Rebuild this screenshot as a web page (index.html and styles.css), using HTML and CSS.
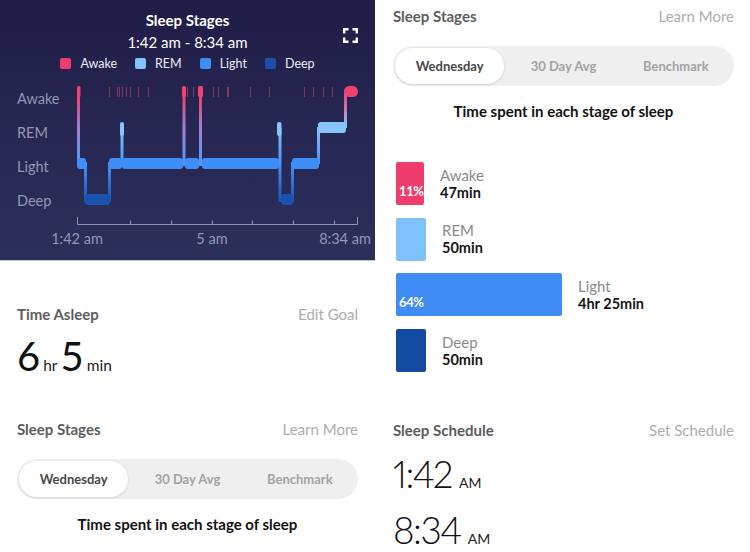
FILE: index.html
```
<!DOCTYPE html>
<html>
<head>
<meta charset="utf-8">
<link rel="stylesheet" href="styles.css">
</head>
<body>
<div class="page">
  <div class="col col-left">
    <section class="chart-panel">
      <div class="chart-title">Sleep Stages</div>
      <div class="chart-range">1:42 am - 8:34 am</div>
      <svg class="expand" width="15" height="15" viewBox="0 0 15 15"><path d="M1.2 5.5V1.2h4.3M9.5 1.2h4.3v4.3M13.8 9.5v4.3H9.5M5.5 13.8H1.2V9.5" fill="none" stroke="#fff" stroke-width="2.4"/></svg>
      <div class="legend">
        <span class="lg"><i class="sw awake"></i>Awake</span>
        <span class="lg"><i class="sw rem"></i>REM</span>
        <span class="lg"><i class="sw light"></i>Light</span>
        <span class="lg"><i class="sw deep"></i>Deep</span>
      </div>
      <svg class="hypno" width="375" height="188" viewBox="0 72 375 188">
        <defs>
          <linearGradient id="gAL" gradientUnits="userSpaceOnUse" x1="0" y1="88" x2="0" y2="166">
            <stop offset="0" stop-color="#f0426f"/><stop offset="0.15" stop-color="#e4467a"/><stop offset="0.55" stop-color="#9a84d6"/><stop offset="1" stop-color="#4f97f8"/>
          </linearGradient>
          <linearGradient id="gLD" gradientUnits="userSpaceOnUse" x1="0" y1="162" x2="0" y2="202">
            <stop offset="0" stop-color="#4a95f8"/><stop offset="1" stop-color="#1a54b2"/>
          </linearGradient>
          <linearGradient id="gRL" gradientUnits="userSpaceOnUse" x1="0" y1="126" x2="0" y2="164">
            <stop offset="0" stop-color="#8ac6fc"/><stop offset="1" stop-color="#4592f8"/>
          </linearGradient>
          <linearGradient id="gRD" gradientUnits="userSpaceOnUse" x1="0" y1="126" x2="0" y2="202">
            <stop offset="0" stop-color="#8ac6fc"/><stop offset="0.5" stop-color="#4592f8"/><stop offset="1" stop-color="#1a54b2"/>
          </linearGradient>
          <linearGradient id="gAR" gradientUnits="userSpaceOnUse" x1="0" y1="90" x2="0" y2="128">
            <stop offset="0" stop-color="#f0426f"/><stop offset="0.3" stop-color="#d9609a"/><stop offset="1" stop-color="#8ac6fc"/>
          </linearGradient>
        </defs>
        <text class="ylab" x="17" y="104">Awake</text>
        <text class="ylab" x="17" y="138">REM</text>
        <text class="ylab" x="17" y="172">Light</text>
        <text class="ylab" x="17" y="206">Deep</text>

        <g class="ticks" stroke="#e8456f" stroke-opacity="0.5" stroke-width="1">
          <line x1="109.5" y1="87" x2="109.5" y2="97"/>
          <line x1="117.5" y1="87" x2="117.5" y2="97"/>
          <line x1="119.5" y1="87" x2="119.5" y2="97"/>
          <line x1="122.5" y1="87" x2="122.5" y2="97"/>
          <line x1="126.5" y1="87" x2="126.5" y2="97"/>
          <line x1="130.5" y1="87" x2="130.5" y2="97"/>
          <line x1="138.5" y1="87" x2="138.5" y2="97"/>
          <line x1="148.5" y1="87" x2="148.5" y2="97"/>
          <line x1="187.5" y1="87" x2="187.5" y2="97"/>
          <line x1="193.5" y1="87" x2="193.5" y2="97"/>
          <line x1="213.5" y1="87" x2="213.5" y2="97"/>
          <line x1="218.5" y1="87" x2="218.5" y2="97"/>
          <line x1="227.5" y1="87" x2="227.5" y2="97"/>
          <line x1="228.5" y1="87" x2="228.5" y2="97"/>
          <line x1="250.5" y1="87" x2="250.5" y2="97"/>
          <line x1="269.5" y1="87" x2="269.5" y2="97"/>
          <line x1="304.5" y1="87" x2="304.5" y2="97"/>
          <line x1="313.5" y1="87" x2="313.5" y2="97"/>
          <line x1="323.5" y1="87" x2="323.5" y2="97"/>
          <line x1="332.5" y1="87" x2="332.5" y2="97"/>
        </g>

        <!-- connectors -->
        <rect x="77" y="90" width="3" height="76" fill="url(#gAL)"/>
        <rect x="84" y="162" width="3" height="40" fill="url(#gLD)"/>
        <rect x="108" y="162" width="3" height="40" fill="url(#gLD)"/>
        <rect x="120.5" y="128" width="3" height="34" fill="url(#gRL)"/>
        <rect x="182.5" y="90" width="3" height="76" fill="url(#gAL)"/>
        <rect x="199" y="90" width="3" height="76" fill="url(#gAL)"/>
        <rect x="278.5" y="128" width="3" height="74" fill="url(#gRD)"/>
        <rect x="291" y="162" width="3" height="40" fill="url(#gLD)"/>
        <rect x="317" y="127" width="3" height="37" fill="url(#gRL)"/>
        <rect x="344" y="90" width="3" height="38" fill="url(#gAR)"/>

        <!-- bands -->
        <g fill="#3f8ef7">
          <rect x="77" y="158" width="9" height="11" rx="3"/>
          <rect x="109" y="158" width="13" height="11" rx="3"/>
          <rect x="122" y="158" width="61" height="11" rx="3"/>
          <rect x="185" y="158" width="14" height="11" rx="3"/>
          <rect x="202" y="158" width="77" height="11" rx="3"/>
          <rect x="292" y="158" width="27" height="11" rx="3"/>
        </g>
        <g fill="#1a52b0">
          <rect x="85" y="194" width="25" height="11" rx="3"/>
          <rect x="281" y="194" width="12" height="11" rx="3"/>
        </g>
        <g fill="#86c3fb">
          <rect x="120" y="122" width="4" height="14" rx="2"/>
          <rect x="277" y="122" width="4.5" height="14" rx="2"/>
          <rect x="318" y="122" width="28" height="11" rx="3"/>
        </g>
        <g fill="#f0426f">
          <rect x="77" y="86" width="3.5" height="11" rx="1.5"/>
          <rect x="182" y="86" width="4" height="11" rx="1.5"/>
          <rect x="198" y="86" width="5" height="11" rx="1.5"/>
          <rect x="344" y="86" width="14" height="11" rx="5.5"/>
        </g>

        <!-- axis -->
        <g stroke="#8f94b6" stroke-width="1" fill="none">
          <path d="M77.5 217V224.5H357.5V217"/>
          <path d="M130.5 220.5V224M171.5 220.5V224M212.5 220.5V224M252.5 220.5V224M293.5 220.5V224M334.5 220.5V224"/>
        </g>
        <text class="xlab" x="77" y="244" text-anchor="middle">1:42 am</text>
        <text class="xlab" x="212" y="244" text-anchor="middle">5 am</text>
        <text class="xlab" x="345" y="244" text-anchor="middle">8:34 am</text>
      </svg>
    </section>

    <section class="block asleep">
      <div class="head"><span class="head-title">Time Asleep</span><span class="head-link">Edit Goal</span></div>
      <div class="duration"><span class="big">6</span><span class="unit">hr</span><span class="big big2">5</span><span class="unit">min</span></div>
    </section>

    <section class="block stages-left">
      <div class="head"><span class="head-title">Sleep Stages</span><span class="head-link">Learn More</span></div>
      <div class="segmented">
        <span class="seg seg-on">Wednesday</span>
        <span class="seg">30 Day Avg</span>
        <span class="seg">Benchmark</span>
      </div>
      <div class="spent">Time spent in each stage of sleep</div>
    </section>
  </div>

  <div class="col col-right">
    <section class="block stages-right">
      <div class="head"><span class="head-title">Sleep Stages</span><span class="head-link">Learn More</span></div>
      <div class="segmented">
        <span class="seg seg-on">Wednesday</span>
        <span class="seg">30 Day Avg</span>
        <span class="seg">Benchmark</span>
      </div>
      <div class="spent">Time spent in each stage of sleep</div>

      <div class="bars">
        <div class="bar-row">
          <div class="bar b-awake" style="width:28px"><span class="pct">11%</span></div>
          <div class="bar-label"><span class="bl-name">Awake</span><span class="bl-val">47min</span></div>
        </div>
        <div class="bar-row">
          <div class="bar b-rem" style="width:30px"></div>
          <div class="bar-label"><span class="bl-name">REM</span><span class="bl-val">50min</span></div>
        </div>
        <div class="bar-row">
          <div class="bar b-light" style="width:166px"><span class="pct">64%</span></div>
          <div class="bar-label"><span class="bl-name">Light</span><span class="bl-val">4hr 25min</span></div>
        </div>
        <div class="bar-row">
          <div class="bar b-deep" style="width:30px"></div>
          <div class="bar-label"><span class="bl-name">Deep</span><span class="bl-val">50min</span></div>
        </div>
      </div>
    </section>

    <section class="block schedule">
      <div class="head"><span class="head-title">Sleep Schedule</span><span class="head-link">Set Schedule</span></div>
      <div class="sched-time"><span class="st-num">1:42</span><span class="st-ampm">AM</span></div>
      <div class="sched-time second"><span class="st-num">8:34</span><span class="st-ampm">AM</span></div>
    </section>
  </div>
</div>
</body>
</html>
```

FILE: styles.css
```
* { box-sizing: border-box; }
html, body { margin: 0; padding: 0; }
body {
  width: 750px;
  height: 552px;
  overflow: hidden;
  background: #fff;
  font-family: Lato, "Open Sans", sans-serif;
  color: #111;
}
.page {
  display: grid;
  grid-template-columns: 375px 375px;
  height: 552px;
}
.col { overflow: hidden; }

/* chart panel */
.chart-panel {
  position: relative;
  height: 261px;
  border-bottom: 1px solid #c3c6d4;
  background: linear-gradient(180deg, #201d48 0%, #262752 50%, #2b305b 100%);
  padding-top: 9.5px;
  color: #fff;
  text-align: center;
}
.chart-title {
  font-size: 15px;
  font-weight: 700;
  line-height: 20px;
}
.chart-range {
  margin-top: 2px;
  font-size: 15px;
  line-height: 20px;
}
.expand {
  position: absolute;
  left: 343px;
  top: 28px;
}
.legend {
  margin-top: 4px;
  height: 16px;
  display: flex;
  justify-content: center;
  gap: 18px;
  font-size: 12.5px;
  line-height: 16px;
  color: #eceaf6;
}
.lg { display: flex; align-items: center; gap: 9px; }
.sw { display: block; width: 11px; height: 11px; border-radius: 2px; }
.sw.awake { background: #f03c6c; }
.sw.rem { background: #80c3fd; }
.sw.light { background: #3f8ff8; }
.sw.deep { background: #1a4ea8; }
.hypno { display: block; }
.hypno text {
  font-family: Lato, "Open Sans", sans-serif;
  font-size: 14.5px;
  fill: #9497b6;
}

/* blocks */
.block { padding: 0 17px; }
.head {
  display: flex;
  justify-content: space-between;
  font-size: 15px;
  line-height: 20px;
}
.head-title { font-weight: 700; color: #5d5d5d; }
.head-link { color: #adadad; }

.asleep { padding-top: 43px; }
.duration {
  margin-top: 7.5px;
  height: 48px;
  font-size: 40px;
  line-height: 48px;
  color: #111;
  white-space: nowrap;
}
.unit { font-size: 15.5px; line-height: 1; margin-left: 3px; color: #222; }
.big2 { margin-left: 3px; }

.stages-left { padding-top: 39.5px; }
.segmented {
  margin-top: 19.5px;
  height: 40px;
  border-radius: 20px;
  background: #efefef;
  padding: 2px;
  display: grid;
  grid-template-columns: 1fr 1fr 1fr;
}
.seg {
  display: flex;
  align-items: center;
  justify-content: center;
  font-size: 13px;
  font-weight: 700;
  color: #a3a3a3;
  border-radius: 18px;
}
.seg-on {
  background: #fff;
  color: #474747;
  box-shadow: 0 1px 3px rgba(0,0,0,0.12);
  margin-right: 3px;
}
.spent {
  margin-top: 15.5px;
  text-align: center;
  font-size: 15px;
  font-weight: 700;
  line-height: 20px;
  color: #111;
}

/* right column */
.stages-right { padding: 6px 16px 0 18px; }
.bars {
  margin-top: 41px;
  padding-left: 3px;
  display: flex;
  flex-direction: column;
  gap: 12.7px;
}
.bar-row { display: flex; align-items: center; }
.bar {
  height: 43px;
  border-radius: 2px;
  display: flex;
  align-items: flex-end;
  padding: 0 0 5px 3px;
  flex: none;
}
.b-awake { background: #ef3d6c; }
.b-rem { background: #80c0fc; }
.b-light { background: #3f8cf7; }
.b-deep { background: #134aa2; }
.pct {
  color: #fff;
  font-weight: 700;
  font-size: 13px;
  letter-spacing: -0.4px;
  line-height: 17px;
  white-space: nowrap;
}
.bar-label {
  margin-left: 16px;
  display: flex;
  flex-direction: column;
  font-size: 15px;
  line-height: 17px;
}
.bl-name { color: #8a8a8a; }
.bl-val { font-weight: 700; color: #141414; font-size: 14.5px; }

.schedule { padding: 48px 16px 0 18px; }
.sched-time {
  margin-top: 11.5px;
  height: 44.4px;
  font-size: 37px;
  line-height: 44.4px;
  font-weight: 300;
  color: #111;
  white-space: nowrap;
  font-variant-numeric: proportional-nums;
}
.st-num { letter-spacing: -1.5px; }
.sched-time.second { margin-top: 11.6px; }
.st-ampm { font-size: 14px; line-height: 1; margin-left: 7px; font-weight: 400; color: #222; }
```
